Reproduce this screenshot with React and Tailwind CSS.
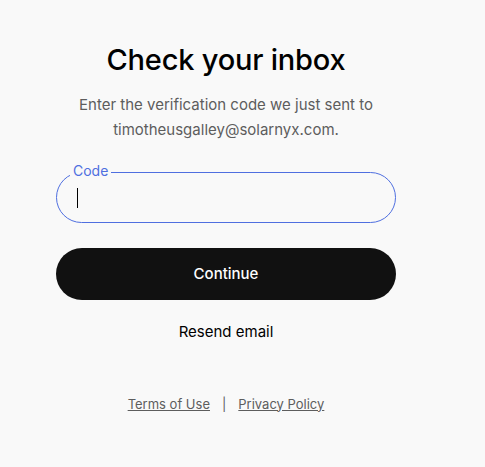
function App() {
  return (
    <div className="min-h-[467px] bg-[#f9f9f9] font-['Inter',sans-serif]">
      <div className="w-[452px] flex flex-col items-center pt-[40px]">
        <h1 className="text-[29px] leading-[40px] font-medium text-black tracking-[-0.2px]">
          Check your inbox
        </h1>

        <p className="mt-[12px] text-[15px] leading-[25px] text-[#5d5d5d] text-center">
          Enter the verification code we just sent to
          <br />
          timotheusgalley@solarnyx.com.
        </p>

        <div className="relative mt-[30px] w-[340px]">
          <span className="absolute left-[14px] top-[-10px] px-[3px] bg-[#f9f9f9] text-[14px] leading-[18px] text-[#4f6fe0]">
            Code
          </span>
          <div className="h-[51px] rounded-full border border-[#4f6fe0] flex items-center px-[20px]">
            <span className="w-px h-[20px] bg-black"></span>
          </div>
        </div>

        <button className="mt-[25px] w-[340px] h-[52px] rounded-full bg-[#111111] text-white text-[15px] font-medium">
          Continue
        </button>

        <button className="mt-[21px] text-[15px] text-black">
          Resend email
        </button>

        <div className="mt-[51px] flex items-center gap-[12px] text-[13px] text-[#5d5d5d]">
          <a className="underline">Terms of Use</a>
          <span>|</span>
          <a className="underline">Privacy Policy</a>
        </div>
      </div>
    </div>
  );
}

export default App;
